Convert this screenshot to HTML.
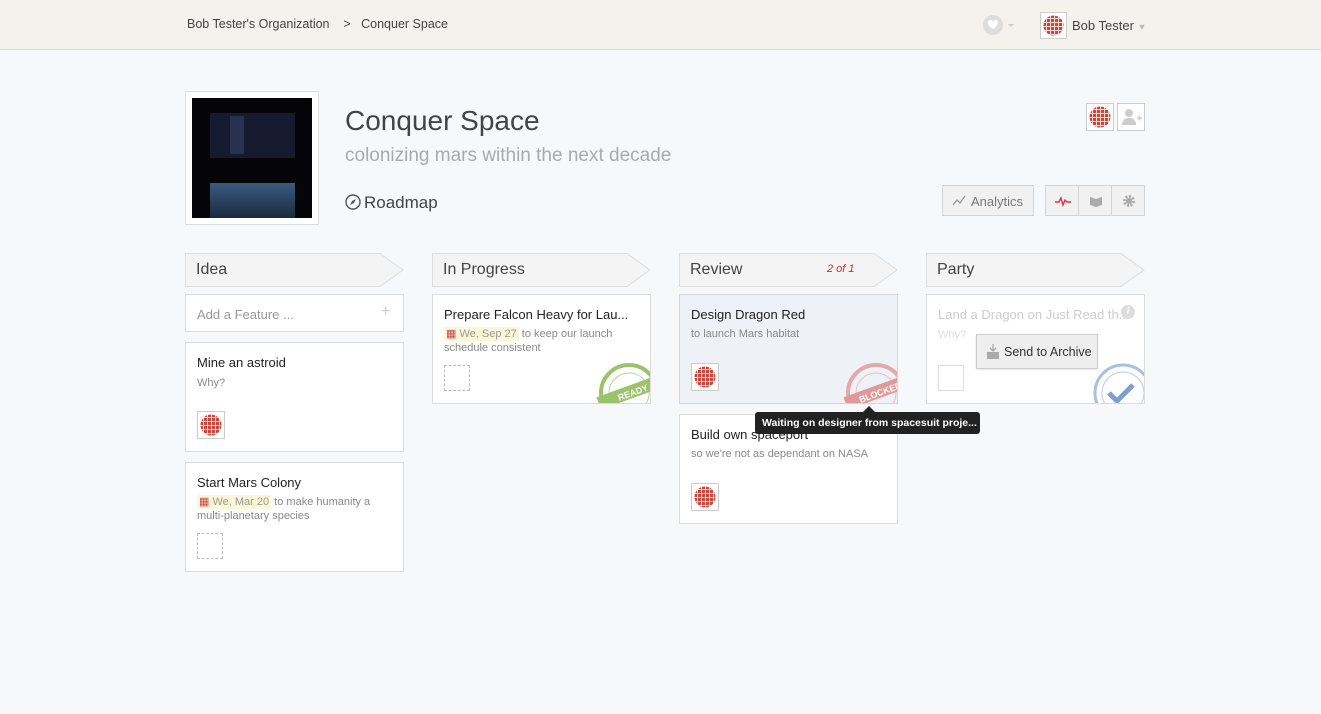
<!DOCTYPE html>
<html><head><meta charset="utf-8">
<style>
*{box-sizing:border-box;margin:0;padding:0}
body{width:1321px;height:714px;background:#f7f8fa;font-family:"Liberation Sans",sans-serif;position:relative;overflow:hidden;color:#333}
.top{position:absolute;left:0;top:0;width:1321px;height:50px;background:#f3f2ec;border-bottom:1px solid #dcdcd6}
.abs{position:absolute}
.hdr{position:absolute;top:253px;height:33px;width:218px}
.hdr svg{position:absolute;left:0;top:0}
.hdr span{position:absolute;left:11px;top:8px;font-size:16px;color:#444}
.card{position:absolute;width:219px;background:#fff;border:1px solid #dcdcdc;overflow:hidden}
.t{position:absolute;left:11px;font-size:13px;color:#222;white-space:nowrap}
.s{position:absolute;left:11px;font-size:11px;color:#888;line-height:14px}
.chk{position:absolute;left:11px;width:26px;height:26px;border:1px dashed #bbb}
.date{background:#fcf6d8;color:#999;padding:1px 2px}
.btn{position:absolute;background:#f1f1f1;border:1px solid #d4d4d4}
</style></head><body>
<svg width="0" height="0" style="position:absolute"><defs>
<pattern id="av" width="4" height="4" patternUnits="userSpaceOnUse"><rect width="4" height="4" fill="#f4d8d4"/><rect width="3" height="3" fill="#c9463d"/></pattern>
</defs></svg>
<div class="top"></div>
<div class="abs" style="left:187px;top:17px;font-size:12.5px;color:#444">Bob Tester's Organization &nbsp;&nbsp; &gt; &nbsp; Conquer Space</div>
<svg class="abs" style="left:982px;top:14px" width="36" height="22"><circle cx="11" cy="11" r="10" fill="#ddd"/><path d="M6 9a2.5 2.5 0 0 1 5-1 2.5 2.5 0 0 1 5 1c0 3-5 6-5 6s-5-3-5-6z" fill="#fff"/><path d="M26 10h6l-3 3z" fill="#ccc"/></svg>
<div class="abs" style="left:1040px;top:12px;width:27px;height:27px;border:1px solid #ccc;background:#fff;padding:2px"><svg width="21" height="21"><circle cx="10.5" cy="10.5" r="10" fill="url(#av)"/></svg></div>
<div class="abs" style="left:1072px;top:18px;font-size:13px;color:#444">Bob Tester <span style="color:#bbb;font-size:9px">▼</span></div>

<div class="abs" style="left:185px;top:91px;width:134px;height:134px;border:1px solid #ddd;background:#fff;padding:6px">
<div style="width:120px;height:120px;background:#050507;position:relative">
<div class="abs" style="left:18px;top:15px;width:85px;height:45px;background:#161a2e"></div>
<div class="abs" style="left:38px;top:18px;width:14px;height:38px;background:#2a3050"></div>
<div class="abs" style="left:18px;top:85px;width:85px;height:35px;background:linear-gradient(#3a5a80,#1a2a40)"></div>
</div></div>
<div class="abs" style="left:345px;top:105px;font-size:28px;color:#444">Conquer Space</div>
<div class="abs" style="left:345px;top:145px;font-size:19px;color:#aaa">colonizing mars within the next decade</div>
<svg class="abs" style="left:345px;top:194px" width="17" height="17"><circle cx="8" cy="8" r="7" fill="none" stroke="#555" stroke-width="1.4"/><path d="M11 5l-2 4-4 2 2-4z" fill="#555"/></svg>
<div class="abs" style="left:364px;top:193px;font-size:17px;color:#444">Roadmap</div>

<div class="abs" style="left:1086px;top:103px;width:28px;height:28px;border:1px solid #ccc;background:#fff;padding:2px"><svg width="22" height="22"><circle cx="11" cy="11" r="10.5" fill="url(#av)"/></svg></div>
<div class="abs" style="left:1117px;top:103px;width:28px;height:28px;border:1px solid #ccc;background:#fff"><svg width="26" height="26"><circle cx="11" cy="9" r="4" fill="#ccc"/><path d="M4 21c0-5 3-7 7-7s7 2 7 7z" fill="#ccc"/><path d="M19 14h5M21.5 11.5v5" stroke="#ccc" stroke-width="1.5"/></svg></div>
<div class="btn" style="left:942px;top:185px;width:92px;height:31px"><svg class="abs" style="left:9px;top:9px" width="14" height="12"><path d="M1 10l4-5 3 3 5-7" fill="none" stroke="#999" stroke-width="1.3"/></svg><span class="abs" style="left:28px;top:8px;font-size:13px;color:#777">Analytics</span></div>
<div class="btn" style="left:1045px;top:185px;width:100px;height:31px"><div class="abs" style="left:32px;top:0;width:1px;height:29px;background:#d4d4d4"></div><div class="abs" style="left:65px;top:0;width:1px;height:29px;background:#d4d4d4"></div>
<svg class="abs" style="left:9px;top:9px" width="16" height="12"><path d="M0 7h4l2-4 2 7 2-5 2 2h4" fill="none" stroke="#d34" stroke-width="1.4"/></svg>
<svg class="abs" style="left:43px;top:9px" width="14" height="12"><path d="M1 2l6 2 6-2v8l-6 2-6-2z" fill="#aaa"/></svg>
<svg class="abs" style="left:76px;top:8px" width="14" height="14"><circle cx="7" cy="7" r="4.5" fill="none" stroke="#aaa" stroke-width="3" stroke-dasharray="2 1.5"/><circle cx="7" cy="7" r="3" fill="#aaa"/></svg></div>

<div class="hdr" style="left:185px"><svg width="220" height="34"><path d="M0.5 0.5H195L218 17 195 33.5H0.5z" fill="#f4f4f4" stroke="#ddd"/></svg><span>Idea</span></div>
<div class="hdr" style="left:432px"><svg width="220" height="34"><path d="M0.5 0.5H195L218 17 195 33.5H0.5z" fill="#f4f4f4" stroke="#ddd"/></svg><span>In Progress</span></div>
<div class="hdr" style="left:679px"><svg width="220" height="34"><path d="M0.5 0.5H195L218 17 195 33.5H0.5z" fill="#f4f4f4" stroke="#ddd"/></svg><span>Review</span><span style="left:148px;top:10px;font-size:11px;color:#b33;font-style:italic">2 of 1</span></div>
<div class="hdr" style="left:926px"><svg width="220" height="34"><path d="M0.5 0.5H195L218 17 195 33.5H0.5z" fill="#f4f4f4" stroke="#ddd"/></svg><span>Party</span></div>

<div class="card" style="left:185px;top:294px;height:38px"><span class="t" style="top:12px;color:#999">Add a Feature ...</span><span class="abs" style="left:195px;top:8px;color:#ccc;font-size:16px">+</span></div>
<div class="card" style="left:185px;top:342px;height:110px"><span class="t" style="top:12px">Mine an astroid</span><span class="s" style="top:33px">Why?</span>
<div class="abs" style="left:11px;top:68px;width:28px;height:28px;border:1px solid #ccc;padding:2px"><svg width="22" height="22"><circle cx="11" cy="11" r="10.5" fill="url(#av)"/></svg></div></div>
<div class="card" style="left:185px;top:462px;height:110px"><span class="t" style="top:12px">Start Mars Colony</span><span class="s" style="top:32px;width:200px"><span class="date"><span style="color:#c44">▦</span> We, Mar 20</span> to make humanity a multi-planetary species</span><div class="chk" style="top:70px"></div></div>

<div class="card" style="left:432px;top:294px;height:110px"><span class="t" style="top:12px">Prepare Falcon Heavy for Lau...</span><span class="s" style="top:32px;width:200px"><span class="date"><span style="color:#c44">▦</span> We, Sep 27</span> to keep our launch schedule consistent</span><div class="chk" style="top:70px"></div>
<svg class="abs" style="left:158px;top:58px" width="70" height="60"><circle cx="38" cy="40" r="28" fill="none" stroke="#9cc26c" stroke-width="4"/><circle cx="38" cy="40" r="20" fill="none" stroke="#b8d694" stroke-width="1"/><rect x="6" y="33" width="66" height="13" fill="#9cc26c" transform="rotate(-20 38 40)"/><text x="26" y="44" font-size="9" fill="#fff" font-weight="bold" transform="rotate(-20 38 40)" font-family="Liberation Sans">READY</text></svg></div>

<div class="card" style="left:679px;top:294px;height:110px;background:#eef1f6;border-color:#d4d8de"><span class="t" style="top:12px">Design Dragon Red</span><span class="s" style="top:32px">to launch Mars habitat</span>
<div class="abs" style="left:11px;top:68px;width:28px;height:28px;border:1px solid #ccc;background:#fff;padding:2px"><svg width="22" height="22"><circle cx="11" cy="11" r="10.5" fill="url(#av)"/></svg></div>
<svg class="abs" style="left:158px;top:58px" width="70" height="60"><circle cx="38" cy="40" r="28" fill="none" stroke="#e4a8a8" stroke-width="4"/><circle cx="38" cy="40" r="20" fill="none" stroke="#ecc0c0" stroke-width="1"/><rect x="6" y="33" width="66" height="13" fill="#e09898" transform="rotate(-20 38 40)"/><text x="20" y="44" font-size="9" fill="#fff" font-weight="bold" transform="rotate(-20 38 40)" font-family="Liberation Sans">BLOCKED</text></svg></div>
<div class="card" style="left:679px;top:414px;height:110px"><span class="t" style="top:12px">Build own spaceport</span><span class="s" style="top:32px">so we're not as dependant on NASA</span>
<div class="abs" style="left:11px;top:68px;width:28px;height:28px;border:1px solid #ccc;padding:2px"><svg width="22" height="22"><circle cx="11" cy="11" r="10.5" fill="url(#av)"/></svg></div></div>
<div class="abs" style="left:755px;top:412px;width:225px;height:22px;background:#222;border-radius:3px;color:#fff;font-size:10.5px;font-weight:bold;padding:5px 7px;white-space:nowrap;overflow:hidden">Waiting on designer from spacesuit proje...</div>
<div class="abs" style="left:863px;top:406px;width:0;height:0;border-left:6px solid transparent;border-right:6px solid transparent;border-bottom:6px solid #222"></div>

<div class="card" style="left:926px;top:294px;height:110px"><span class="t" style="top:12px;color:#ccc">Land a Dragon on Just Read th...</span><span class="abs" style="left:194px;top:10px;width:14px;height:14px;border-radius:7px;background:#ddd;color:#fff;font-size:10px;text-align:center;line-height:14px;font-style:italic;font-weight:bold">i</span><span class="s" style="top:33px;color:#ddd">Why?</span><div class="chk" style="top:70px;border:1px solid #ddd"></div>
<svg class="abs" style="left:158px;top:58px" width="70" height="60"><circle cx="38" cy="40" r="28" fill="none" stroke="#a8c0e0" stroke-width="3"/><circle cx="38" cy="40" r="21" fill="none" stroke="#bcd" stroke-width="1"/><path d="M24 40l8 8 16-16" fill="none" stroke="#7fa0cc" stroke-width="5"/></svg></div>
<div class="abs" style="left:976px;top:334px;width:122px;height:35px;background:#eee;border:1px solid #ccc;box-shadow:0 1px 2px rgba(0,0,0,.1)"><svg class="abs" style="left:9px;top:9px" width="14" height="16"><path d="M7 0v6M4 4l3 3 3-3" stroke="#999" fill="none"/><path d="M1 8h12v7H1z" fill="#aaa"/></svg><span class="abs" style="left:27px;top:10px;font-size:12.5px;color:#333">Send to Archive</span></div>
</body></html>
